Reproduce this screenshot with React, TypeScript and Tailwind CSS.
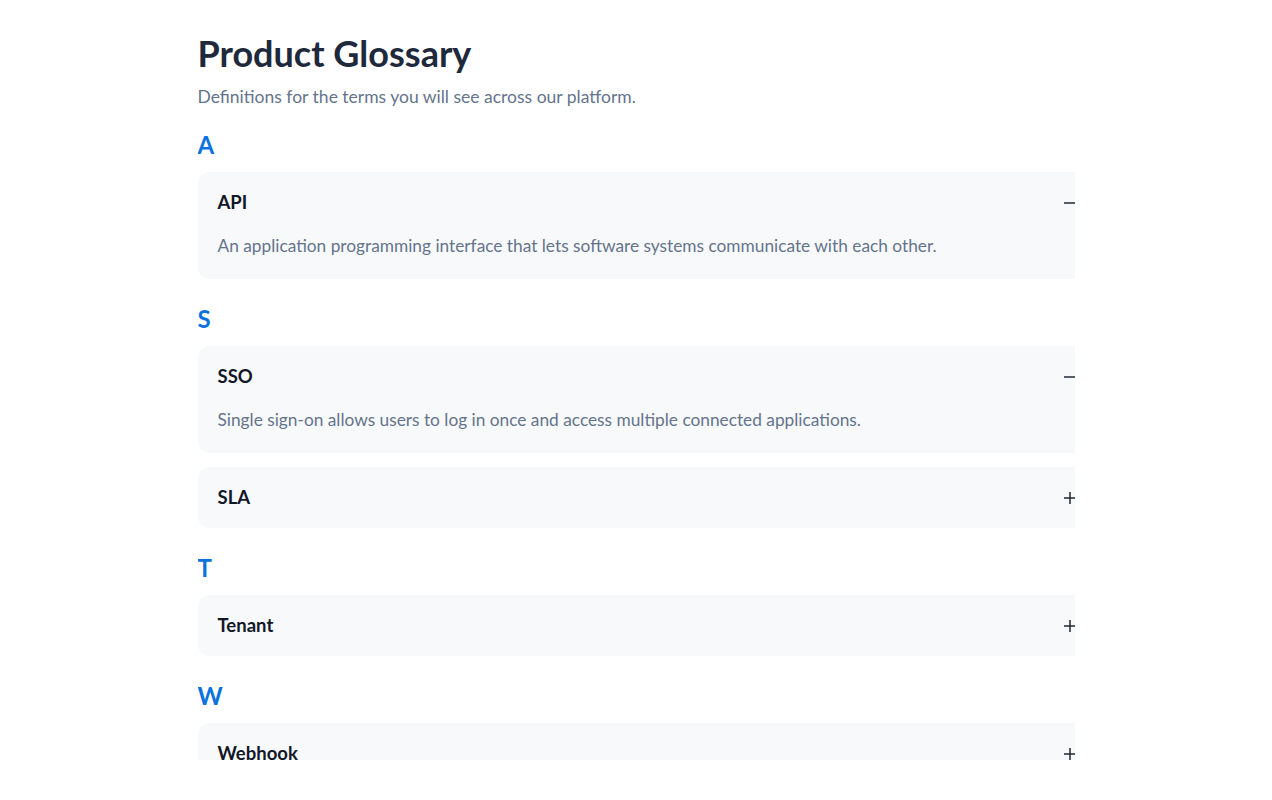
const glossary = [
  {
    letter: "A",
    items: [
      {
        term: "API",
        desc: "An application programming interface that lets software systems communicate with each other.",
        open: true,
      },
    ],
  },
  {
    letter: "S",
    items: [
      {
        term: "SSO",
        desc: "Single sign-on allows users to log in once and access multiple connected applications.",
        open: true,
      },
      { term: "SLA", desc: "A service level agreement defines the uptime and support commitments we make.", open: false },
    ],
  },
  {
    letter: "T",
    items: [{ term: "Tenant", desc: "An isolated workspace that holds one customer's data and settings.", open: false }],
  },
  {
    letter: "W",
    items: [{ term: "Webhook", desc: "An HTTP callback that notifies your system when an event happens.", open: false }],
  },
];

function ToggleIcon({ open }: { open: boolean }) {
  return (
    <svg width="14" height="14" viewBox="0 0 14 14" className="shrink-0 text-[#1f2937]">
      <line x1="1" y1="7" x2="13" y2="7" stroke="currentColor" strokeWidth="1.5" />
      {!open && <line x1="7" y1="1" x2="7" y2="13" stroke="currentColor" strokeWidth="1.5" />}
    </svg>
  );
}

export default function App() {
  return (
    <div className="min-h-screen bg-white font-['Lato',sans-serif]">
      <div className="mx-auto w-[877px] h-[760px] overflow-hidden pt-[31px]">
        <h1 className="text-[36px] leading-[44px] font-bold text-[#1e293b]">Product Glossary</h1>
        <p className="mt-[10px] text-[17.5px] leading-6 text-[#64748b]">
          Definitions for the terms you will see across our platform.
        </p>

        <div className="w-[899px] mt-[22px]">
          {glossary.map((section, i) => (
            <section key={section.letter} className={i > 0 ? "mt-[26px]" : ""}>
              <h2 className="text-[24px] leading-7 font-bold text-[#0b72e0] mb-[13px]">{section.letter}</h2>
              <div className="flex flex-col gap-[14px]">
                {section.items.map((item) => (
                  <div key={item.term} className="rounded-xl bg-[#f8f9fb]">
                    <div className="h-[61px] px-5 flex items-center justify-between">
                      <span className="text-[18.5px] font-bold text-[#111827]">{item.term}</span>
                      <ToggleIcon open={item.open} />
                    </div>
                    {item.open && (
                      <p className="px-5 pb-5 text-[17.3px] leading-[26px] text-[#64748b]">{item.desc}</p>
                    )}
                  </div>
                ))}
              </div>
            </section>
          ))}
        </div>
      </div>
    </div>
  );
}
